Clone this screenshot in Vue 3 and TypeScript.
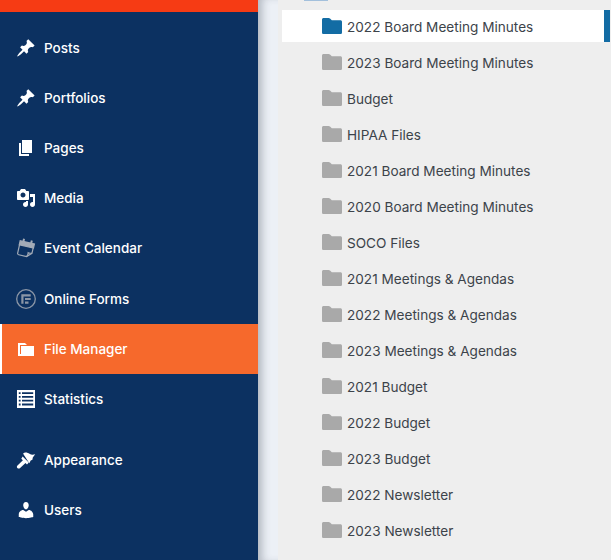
<script setup lang="ts">
const menu: { label: string; icon: string; active?: boolean; gap?: boolean; tall?: boolean }[] = [
  { label: 'Posts', icon: 'pin' },
  { label: 'Portfolios', icon: 'pin' },
  { label: 'Pages', icon: 'pages' },
  { label: 'Media', icon: 'media' },
  { label: 'Event Calendar', icon: 'cal' },
  { label: 'Online Forms', icon: 'forms', tall: true },
  { label: 'File Manager', icon: 'folder', active: true },
  { label: 'Statistics', icon: 'stats' },
  { label: 'Appearance', icon: 'brush', gap: true },
  { label: 'Users', icon: 'user' },
]
const folders: string[] = [
  '2022 Board Meeting Minutes',
  '2023 Board Meeting Minutes',
  'Budget',
  'HIPAA Files',
  '2021 Board Meeting Minutes',
  '2020 Board Meeting Minutes',
  'SOCO Files',
  '2021 Meetings & Agendas',
  '2022 Meetings & Agendas',
  '2023 Meetings & Agendas',
  '2021 Budget',
  '2022 Budget',
  '2023 Budget',
  '2022 Newsletter',
  '2023 Newsletter',
]
</script>

<template>
  <div class="page">
    <aside class="side">
      <div class="topbar"></div>
      <nav class="menu">
        <a
          v-for="m in menu"
          :key="m.label"
          class="item"
          :class="{ active: m.active, gap: m.gap, tall: m.tall }"
        >
          <svg class="ico" viewBox="0 0 20 20" fill="#fff" aria-hidden="true">
            <template v-if="m.icon === 'pin'">
              <path d="M10.44 3.02l1.82-1.82 6.36 6.35-1.83 1.82c-1.05-.68-2.48-.57-3.41.36l-.75.75c-.92.93-1.04 2.35-.35 3.41l-1.83 1.82-2.41-2.41-2.8 2.79c-.42.42-3.38 2.71-3.8 2.29s1.86-3.39 2.28-3.81l2.79-2.79L4.1 9.37l1.83-1.82c1.05.69 2.48.57 3.41-.36l.75-.75c.93-.92 1.04-2.35.35-3.41z" />
            </template>
            <template v-else-if="m.icon === 'pages'">
              <path d="M6 15V2h10v13H6zm-1 1h8v2H3V5h2v11z" />
            </template>
            <template v-else-if="m.icon === 'media'">
              <path d="M13 11V4c0-.55-.45-1-1-1h-1.67L9 1H5L3.67 3H2c-.55 0-1 .45-1 1v7c0 .55.45 1 1 1h10c.55 0 1-.45 1-1zM7 4.500c1.38 0 2.500 1.12 2.500 2.500S8.38 9.500 7 9.500 4.500 8.380 4.500 7 5.620 4.500 7 4.500zM14 6h5v10.500c0 1.380-1.120 2.500-2.500 2.500S14 17.880 14 16.500s1.120-2.500 2.500-2.500c.17 0 .34.02.5.05V9h-3V6zm-4 8.050V13h2v3.500c0 1.380-1.120 2.500-2.500 2.500S7 17.880 7 16.500 8.120 14 9.500 14c.17 0 .34.02.5.05z" />
            </template>
            <template v-else-if="m.icon === 'cal'">
              <g fill="none" stroke="#a3abb7" stroke-width="1.200" transform="rotate(13 10 10)">
                <path d="M3 7.500v9.300c0 .8.600 1.400 1.400 1.400h8.100l4.500-4.300V7.500" />
                <path d="M2.700 4.200h14.600v4.200H2.700z" fill="#a3abb7" />
                <path d="M6 1.400v3.600M14 1.400v3.600" stroke-width="2" />
                <path d="M12.500 18c.9-1.200 1-2.700.7-3.900 1.300.3 2.800 0 3.800-.6" />
              </g>
            </template>
            <template v-else-if="m.icon === 'forms'">
              <circle cx="10" cy="10" r="9.300" fill="none" stroke="#8b96a6" stroke-width="1.300" />
              <path d="M5.300 5.300h9.400v2.100H5.300zM5.300 5.300h2.200v9.400H5.300zM9 9h5.700v2.100H9zM9 12.500h3.500v2.200H9z" fill="#8b96a6" />
            </template>
            <template v-else-if="m.icon === 'folder'">
              <path d="M5 7h13v10H2V4h7l2 2H4v9h1V7z" />
            </template>
            <template v-else-if="m.icon === 'stats'">
              <path fill-rule="evenodd" d="M1 1h18v18H1zM2.800 3.200v1.800h1.800V3.200zm3.200 0v1.800h11.200V3.200zM2.800 7v1.800h1.800V7zM6 7v1.800h11.200V7zM2.800 10.800v1.800h1.800v-1.800zm3.200 0v1.800h11.200v-1.800zM2.800 14.600v1.800h1.800v-1.800zm3.200 0v1.800h11.200v-1.800z" />
            </template>
            <template v-else-if="m.icon === 'brush'">
              <path d="M7 3.600c1.900-2 4.700-1.100 6.500.1 1.500 1 3.500 1.300 5.700.5l-2.400 3.300-.4 2.200-1.700.8-1.400 2.700z" />
              <path d="M6.600 6.400l6.200 6.200-1.800 1.800-1.500-1.500-5.400 5.100c-.8.700-2 .7-2.700 0s-.7-1.900.1-2.600l5.400-5.100-1.600-1.600z" />
            </template>
            <template v-else-if="m.icon === 'user'">
              <path d="M10 9.250c-2.270 0-2.730-3.440-2.730-3.440C7 4.020 7.820 2 9.970 2c2.160 0 2.980 2.020 2.710 3.810 0 0-.41 3.440-2.680 3.440zm0 2.570L12.720 10c2.390 0 4.520 2.330 4.520 4.530v2.490s-3.650 1.130-7.240 1.130c-3.650 0-7.240-1.130-7.240-1.130v-2.490c0-2.250 1.940-4.480 4.470-4.480z" />
            </template>
          </svg>
          <span class="label">{{ m.label }}</span>
        </a>
      </nav>
    </aside>
    <div class="gutter"></div>
    <main class="main">
      <div class="stub"></div>
      <ul class="tree">
        <li v-for="(f, i) in folders" :key="f" class="row" :class="{ sel: i === 0 }">
          <svg class="fold" viewBox="0 0 20 16" aria-hidden="true">
            <path d="M1.600 0h5c.6 0 1 .2 1.400.6L9.800 2.200h8.600c.9 0 1.600.7 1.600 1.600v10.600c0 .9-.7 1.600-1.600 1.600H1.600C.7 16 0 15.300 0 14.400V1.600C0 .7.7 0 1.600 0z" />
          </svg>
          <span class="name">{{ f }}</span>
        </li>
      </ul>
    </main>
  </div>
</template>

<style>
html, body { margin: 0; padding: 0; overflow: hidden; }
</style>

<style scoped>
.page {
  display: flex;
  width: 611px;
  height: 560px;
  overflow: hidden;
  background: #eeeeee;
  font-family: Inter, "Liberation Sans", sans-serif;
}
.side {
  flex: none;
  width: 258px;
  height: 560px;
  background: #0c3161;
}
.gutter {
  flex: none;
  width: 20px;
  height: 560px;
  background: #ecf0f6;
  box-shadow: inset 8px 0 9px -4px rgba(40, 50, 65, 0.3);
}
.topbar { height: 12px; background: #f63b14; }
.menu { display: flex; flex-direction: column; padding-top: 11px; }
.item {
  display: flex;
  align-items: center;
  height: 50px;
  padding-left: 16px;
  color: #fff;
  font-size: 13.5px;
  font-weight: 500;
  box-sizing: border-box;
}
.item.tall { height: 51px; }
.item.gap { margin-top: 11px; }
.item.active {
  background: #f6692c;
  border-left: 2px solid #fff;
  padding-left: 14px;
}
.ico { width: 20px; height: 20px; flex: none; margin-right: 8px; }
.main { flex: 1; min-width: 0; padding: 0 1px 0 4px; box-sizing: border-box; position: relative; }
.stub {
  position: absolute;
  left: 26px;
  top: 0;
  width: 24px;
  height: 1px;
  background: #a3c0dc;
}
.tree { list-style: none; margin: 10px 0 0; padding: 0; display: flex; flex-direction: column; gap: 4px; }
.row {
  display: flex;
  align-items: center;
  height: 32px;
  padding-left: 40px;
  color: #3c434a;
  font-size: 13.6px;
  box-sizing: border-box;
}
.name { padding-top: 2px; }
.row.sel { background: #fff; border-right: 6px solid #136ca4; }
.fold { width: 20px; height: 16px; flex: none; margin-right: 5px; fill: #a9a9a9; }
.row.sel .fold { fill: #136ca4; }
</style>
